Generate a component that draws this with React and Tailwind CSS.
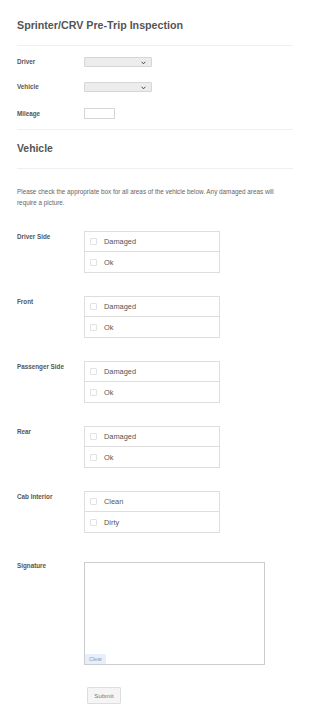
import React from "react";

function Chevron() {
  return (
    <svg width="5" height="4" viewBox="0 0 5 4" className="absolute right-[5px] top-[3px]">
      <path d="M0.6 0.8 L2.5 2.8 L4.4 0.8" fill="none" stroke="#333" strokeWidth="0.9" />
    </svg>
  );
}

function SelectBox() {
  return (
    <div className="relative w-[68px] h-[10px] bg-[#ececec] border border-[#d6d6d6] rounded-[1px]">
      <Chevron />
    </div>
  );
}

function Label({ children, className = "" }) {
  return (
    <div className={"w-[67px] shrink-0 text-[6.3px] leading-[8px] font-bold text-[#555] " + className}>
      {children}
    </div>
  );
}

function CheckGroup({ label, options, className = "" }) {
  return (
    <div className={"flex " + className}>
      <Label className="pt-[2px]">{label}</Label>
      <div className="w-[136px] border border-[#dedede]">
        {options.map((o, i) => (
          <div
            key={o}
            className={
              "h-[20px] flex items-center pl-[5px] " +
              (i < options.length - 1 ? "border-b border-[#dedede]" : "")
            }
          >
            <span className="w-[7px] h-[7px] border border-[#e2e2e2] rounded-[1px] bg-white" />
            <span className="ml-[7px] text-[7.4px] leading-[9px] text-[#555]">{o}</span>
          </div>
        ))}
      </div>
    </div>
  );
}

export default function App() {
  return (
    <div className="w-[310px] min-h-[721px] bg-white px-[17px] font-['Liberation_Sans',Arial,sans-serif] text-[#555]">
      <h1 className="pt-[19px] text-[10.7px] leading-[12px] font-bold text-[#555]">
        Sprinter/CRV Pre-Trip Inspection
      </h1>
      <div className="mt-[14px] h-px bg-[#efefef]" />

      <div className="mt-[11px] flex items-center h-[10px]">
        <Label>Driver</Label>
        <SelectBox />
      </div>
      <div className="mt-[15px] flex items-center h-[10px]">
        <Label>Vehicle</Label>
        <SelectBox />
      </div>
      <div className="mt-[16px] flex items-center h-[11px]">
        <Label>Mileage</Label>
        <div className="w-[31px] h-[11px] bg-white border border-[#d6d6d6]" />
      </div>
      <div className="mt-[10px] h-px bg-[#efefef]" />

      <h2 className="mt-[13px] text-[10.4px] leading-[12px] font-bold text-[#555]">Vehicle</h2>
      <div className="mt-[13px] h-px bg-[#efefef]" />

      <p className="mt-[18px] w-[274px] text-[6.35px] leading-[10.5px] text-[#666]">
        Please check the appropriate box for all areas of the vehicle below. Any damaged areas will
        require a picture.
      </p>

      <CheckGroup className="mt-[23px]" label="Driver Side" options={["Damaged", "Ok"]} />
      <CheckGroup className="mt-[23px]" label="Front" options={["Damaged", "Ok"]} />
      <CheckGroup className="mt-[23px]" label="Passenger Side" options={["Damaged", "Ok"]} />
      <CheckGroup className="mt-[23px]" label="Rear" options={["Damaged", "Ok"]} />
      <CheckGroup className="mt-[23px]" label="Cab Interior" options={["Clean", "Dirty"]} />

      <div className="mt-[29px] flex">
        <Label className="pt-[0px]">Signature</Label>
        <div className="w-[181px] h-[103px] border border-[#cccccc] flex flex-col justify-end">
          <div className="w-[21px] h-[10px] bg-[#e6effc] rounded-tr-[2px] flex items-center justify-center text-[5.5px] leading-[6px] text-[#8b9bb0]">
            Clear
          </div>
        </div>
      </div>

      <div className="mt-[22px] ml-[70px] w-[34px] h-[17px] bg-[#f5f5f5] border border-[#dddddd] rounded-[1px] flex items-center justify-center text-[6.2px] leading-[7px] text-[#777]">
        Submit
      </div>
    </div>
  );
}
